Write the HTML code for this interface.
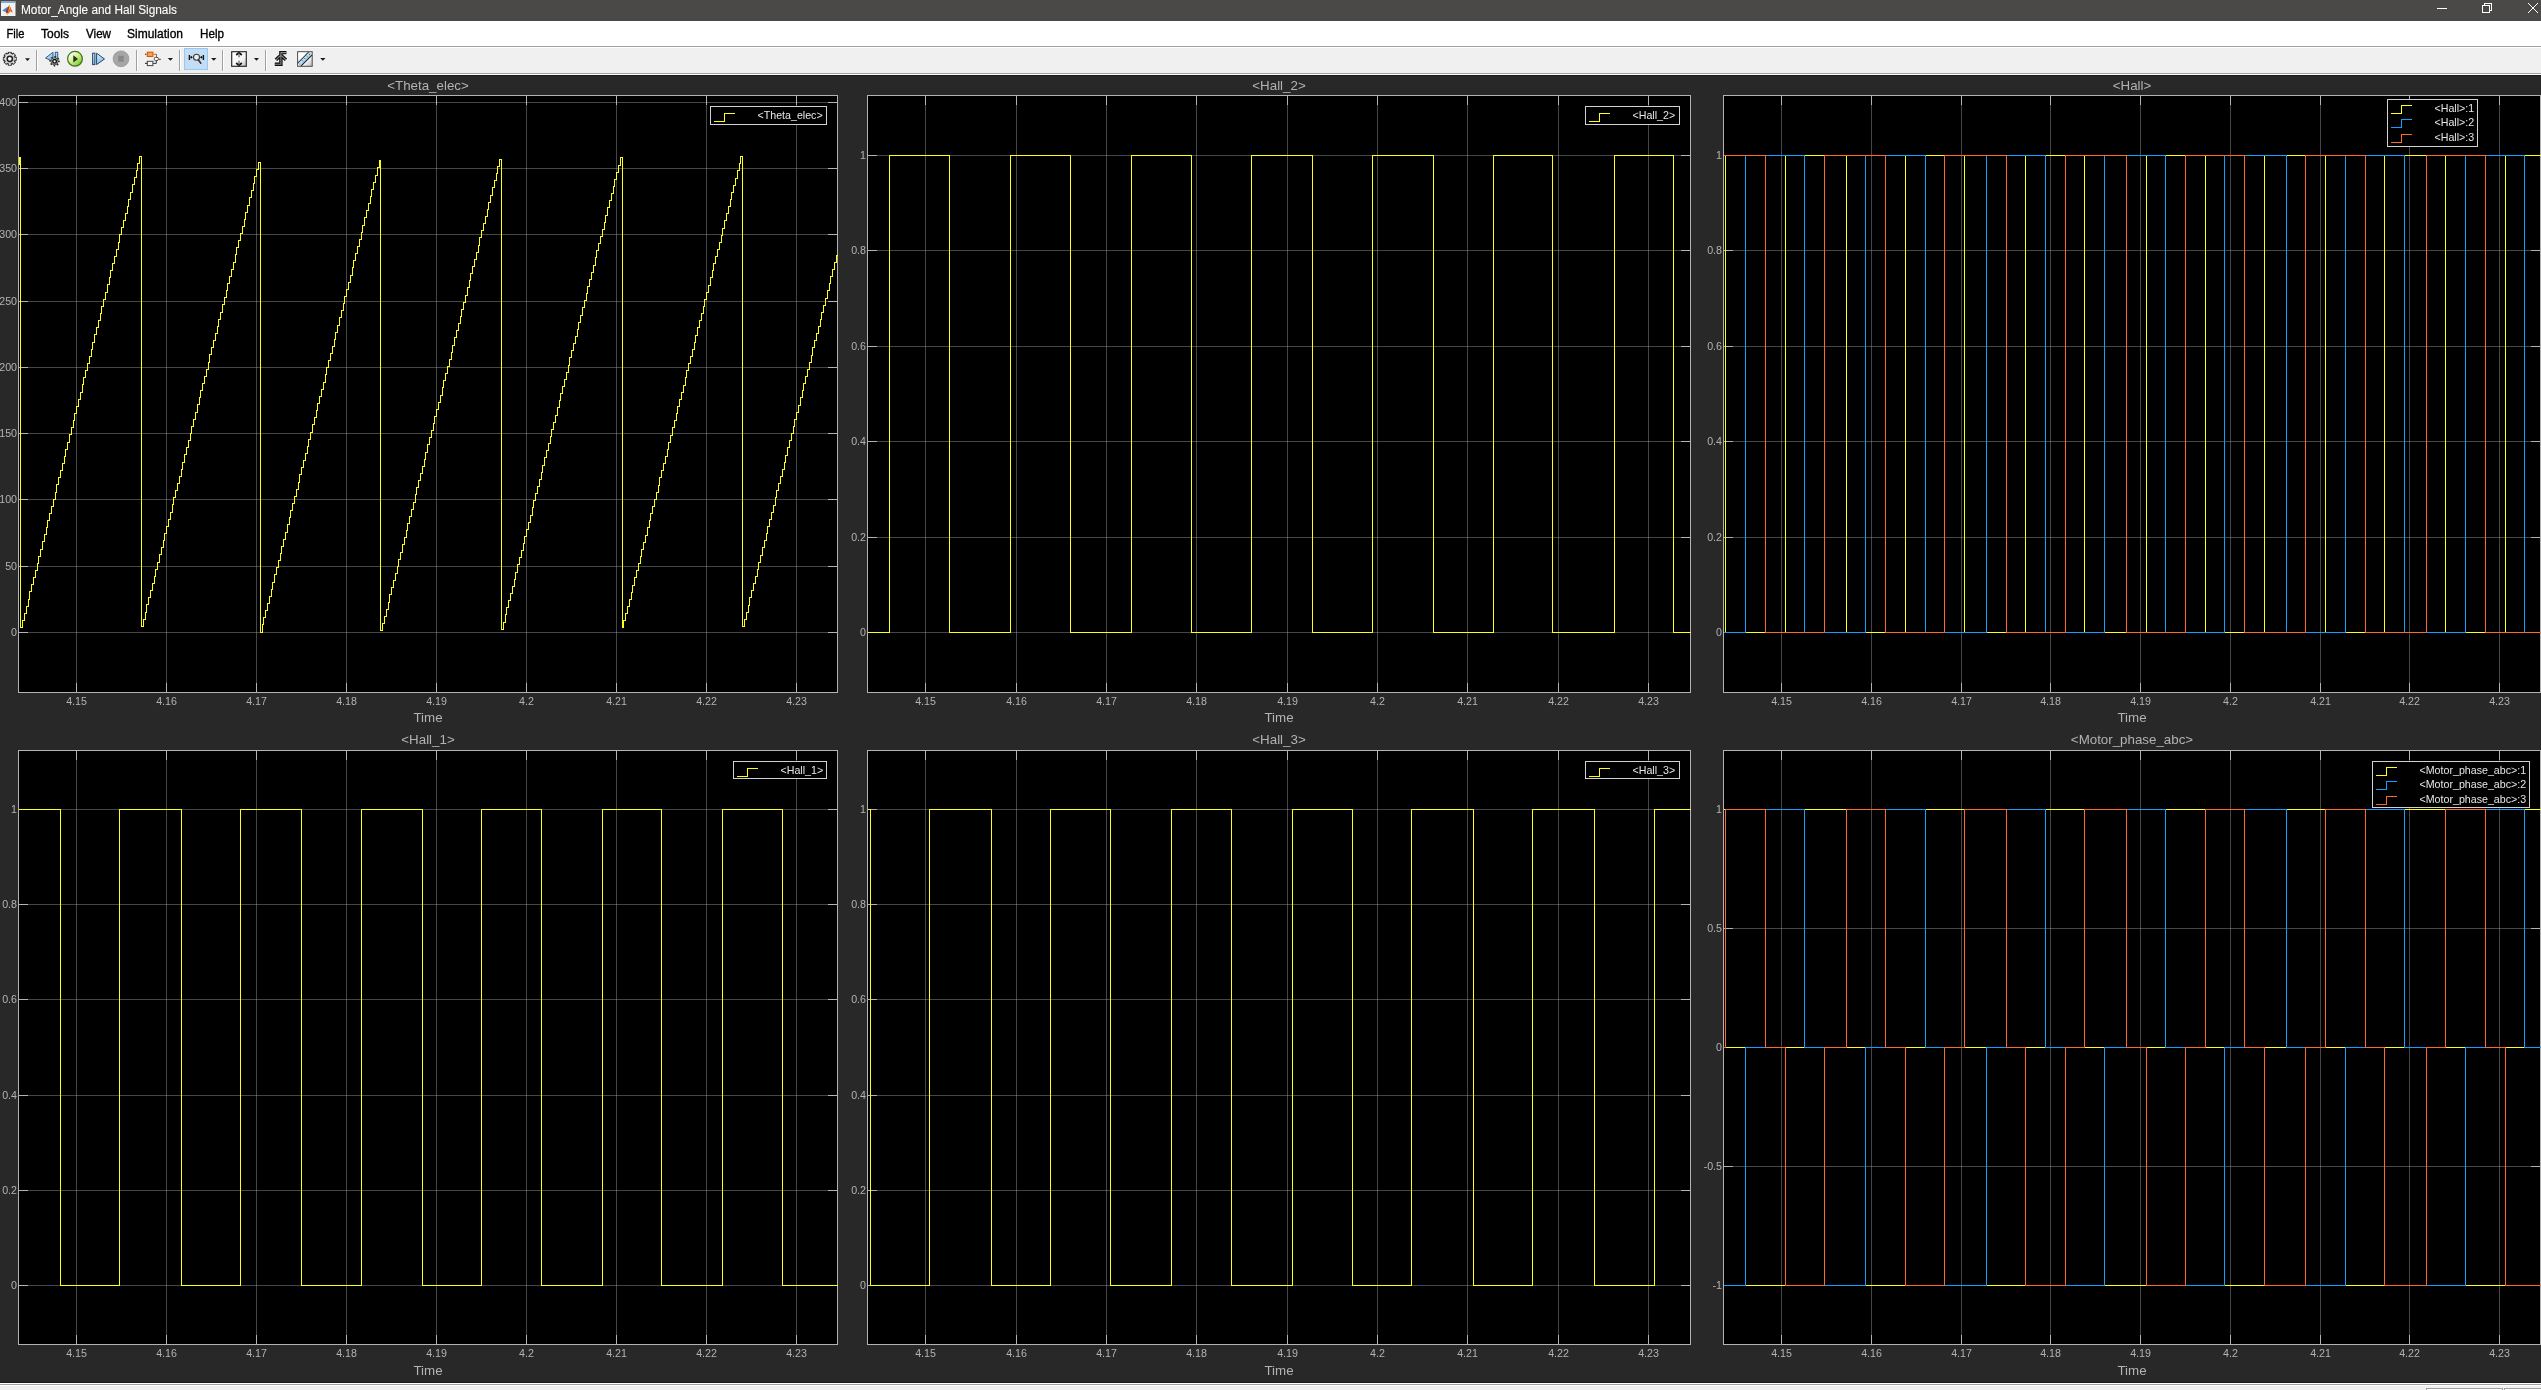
<!DOCTYPE html><html><head><meta charset="utf-8"><style>html,body{margin:0;padding:0;width:2541px;height:1390px;overflow:hidden;background:#282828}svg{display:block;will-change:transform}text{font-family:"Liberation Sans", sans-serif}</style></head><body>
<svg width="2541" height="1390" viewBox="0 0 2541 1390" shape-rendering="crispEdges">
<rect x="0" y="0" width="2541" height="21" fill="#4b4947"/>
<g shape-rendering="geometricPrecision"><rect x="1" y="1.5" width="14.5" height="14.5" fill="#f2f2f2"/><rect x="1" y="1.5" width="14.5" height="1.5" fill="#78b0dc"/><path d="M2.2 10.6 L7.6 6.8 L8.6 8.2 L6.2 12.2 Z" fill="#3f8bd0"/><path d="M5.8 12 L8.6 6.2 L9.4 5 L8.9 9.5 L7.3 14.6 Z" fill="#a8281c"/><path d="M7.3 14.6 L9.4 5 L10.6 8.6 L11 11 L9 13 Z" fill="#e8721e"/><path d="M9.4 5 L12.9 12.9 L11 11.2 Z" fill="#d2412a"/><path d="M9.1 6 L9.8 5.6 L9.9 9 L9.2 9.4 Z" fill="#f3c62c"/><path d="M6.8 13.4 L8 12.6 L8.2 14.4 L7.4 14.8 Z" fill="#f4b020"/></g>
<text x="21" y="14" font-size="12.3" fill="#ffffff" stroke="#ffffff" stroke-width="0.08" textLength="156" lengthAdjust="spacingAndGlyphs">Motor_Angle and Hall Signals</text>
<rect x="2437" y="8" width="10" height="1" fill="#ffffff"/>
<g fill="none" stroke="#ffffff" stroke-width="1"><rect x="2482.5" y="5.5" width="7" height="7"/><path d="M2484.5 5.5 V3.5 H2491.5 V10.5 H2489.5"/></g>
<g shape-rendering="geometricPrecision" stroke="#ffffff" stroke-width="1"><path d="M2528 3 L2538 13 M2538 3 L2528 13"/></g>
<rect x="0" y="21" width="2541" height="25" fill="#ffffff"/>
<text x="6.5" y="38" font-size="12.3" fill="#000000" stroke="#000000" stroke-width="0.35" textLength="18" lengthAdjust="spacingAndGlyphs">File</text>
<text x="41" y="38" font-size="12.3" fill="#000000" stroke="#000000" stroke-width="0.35" textLength="28" lengthAdjust="spacingAndGlyphs">Tools</text>
<text x="86" y="38" font-size="12.3" fill="#000000" stroke="#000000" stroke-width="0.35" textLength="25" lengthAdjust="spacingAndGlyphs">View</text>
<text x="127" y="38" font-size="12.3" fill="#000000" stroke="#000000" stroke-width="0.35" textLength="56" lengthAdjust="spacingAndGlyphs">Simulation</text>
<text x="200" y="38" font-size="12.3" fill="#000000" stroke="#000000" stroke-width="0.35" textLength="24" lengthAdjust="spacingAndGlyphs">Help</text>
<rect x="0" y="46" width="2541" height="1" fill="#a0a0a0"/>
<rect x="0" y="47" width="2541" height="1" fill="#ffffff"/>
<rect x="0" y="48" width="2541" height="25" fill="#f0f0f0"/>
<rect x="0" y="73" width="2541" height="1" fill="#a0a0a0"/>
<rect x="0" y="74" width="2541" height="1" fill="#ffffff"/>
<rect x="0" y="75" width="2541" height="1" fill="#1b1b1b"/>
<rect x="0" y="76" width="2541" height="1306" fill="#282828"/>
<rect x="0" y="1382" width="2541" height="1" fill="#1b1b1b"/>
<rect x="0" y="1383" width="2541" height="1" fill="#ffffff"/>
<rect x="0" y="1384" width="2541" height="1" fill="#a0a0a0"/>
<rect x="0" y="1385" width="2541" height="1" fill="#ffffff"/>
<rect x="0" y="1386" width="2541" height="4" fill="#f0f0f0"/>
<rect x="2426.5" y="1388.5" width="76" height="3" fill="#ffffff" stroke="#a0a0a0" stroke-width="1"/>
<rect x="2504.5" y="1388.5" width="40" height="3" fill="#ffffff" stroke="#a0a0a0" stroke-width="1"/>
<defs><linearGradient id="gg" gradientUnits="userSpaceOnUse" x1="4" y1="53" x2="16" y2="65"><stop offset="0" stop-color="#f6f6f6"/><stop offset="1" stop-color="#9c9c9c"/></linearGradient><linearGradient id="gg2" gradientUnits="userSpaceOnUse" x1="50" y1="57" x2="59" y2="66"><stop offset="0" stop-color="#ffffff"/><stop offset="1" stop-color="#a0a0a0"/></linearGradient><linearGradient id="gp" x1="0.15" y1="0.15" x2="0.85" y2="0.9"><stop offset="0" stop-color="#ffffff"/><stop offset="0.55" stop-color="#c2ec70"/><stop offset="1" stop-color="#6cc83c"/></linearGradient><linearGradient id="gs" x1="0.2" y1="0.2" x2="1" y2="1"><stop offset="0" stop-color="#ffffff"/><stop offset="0.55" stop-color="#f4f4f4"/><stop offset="1" stop-color="#b8b8b8"/></linearGradient><linearGradient id="gb" x1="0" y1="0" x2="0.6" y2="1"><stop offset="0" stop-color="#dff2ff"/><stop offset="1" stop-color="#7ab8e6"/></linearGradient><linearGradient id="gr" x1="0" y1="0" x2="1" y2="1"><stop offset="0" stop-color="#e8f6ff"/><stop offset="1" stop-color="#7cc0ea"/></linearGradient></defs><g shape-rendering="geometricPrecision"><g fill="url(#gg)" stroke="#2e2e2e" stroke-width="1.1"><rect x="8.35" y="52.45" width="2.90" height="1.83" transform="rotate(0.0 9.8 58.8)"/><rect x="8.35" y="52.45" width="2.90" height="1.83" transform="rotate(45.0 9.8 58.8)"/><rect x="8.35" y="52.45" width="2.90" height="1.83" transform="rotate(90.0 9.8 58.8)"/><rect x="8.35" y="52.45" width="2.90" height="1.83" transform="rotate(135.0 9.8 58.8)"/><rect x="8.35" y="52.45" width="2.90" height="1.83" transform="rotate(180.0 9.8 58.8)"/><rect x="8.35" y="52.45" width="2.90" height="1.83" transform="rotate(225.0 9.8 58.8)"/><rect x="8.35" y="52.45" width="2.90" height="1.83" transform="rotate(270.0 9.8 58.8)"/><rect x="8.35" y="52.45" width="2.90" height="1.83" transform="rotate(315.0 9.8 58.8)"/></g><circle cx="9.8" cy="58.8" r="5.52" fill="url(#gg)" stroke="#2e2e2e" stroke-width="1.1"/><g fill="url(#gg)"><rect x="8.90" y="52.68" width="1.80" height="2.20" transform="rotate(0.0 9.8 58.8)"/><rect x="8.90" y="52.68" width="1.80" height="2.20" transform="rotate(45.0 9.8 58.8)"/><rect x="8.90" y="52.68" width="1.80" height="2.20" transform="rotate(90.0 9.8 58.8)"/><rect x="8.90" y="52.68" width="1.80" height="2.20" transform="rotate(135.0 9.8 58.8)"/><rect x="8.90" y="52.68" width="1.80" height="2.20" transform="rotate(180.0 9.8 58.8)"/><rect x="8.90" y="52.68" width="1.80" height="2.20" transform="rotate(225.0 9.8 58.8)"/><rect x="8.90" y="52.68" width="1.80" height="2.20" transform="rotate(270.0 9.8 58.8)"/><rect x="8.90" y="52.68" width="1.80" height="2.20" transform="rotate(315.0 9.8 58.8)"/></g><circle cx="9.8" cy="58.8" r="2.6" fill="#ffffff" stroke="#1e1e1e" stroke-width="1.5"/><path d="M25 58.2 L30 58.2 L27.5 61.0 Z" fill="#1a1a1a"/><path d="M45.5 58 L53 52.3 L53 61.5 Z" fill="url(#gb)" stroke="#2f5f90" stroke-width="1" stroke-linejoin="round"/><rect x="55.3" y="52.3" width="2.4" height="7" fill="url(#gb)" stroke="#2f5f90" stroke-width="1"/><circle cx="54.6" cy="61.3" r="4.1" fill="none" stroke="#2a2a2a" stroke-width="2.2" stroke-dasharray="1.55 1.67" transform="rotate(-10 54.6 61.3)"/><circle cx="54.6" cy="61.3" r="3.5" fill="url(#gg2)" stroke="#3a3a3a" stroke-width="0.8"/><circle cx="54.6" cy="61.3" r="1.8" fill="#ffffff" stroke="#111111" stroke-width="1.4"/><circle cx="75" cy="58.8" r="7.4" fill="url(#gp)" stroke="#43701c" stroke-width="1.2"/><path d="M73.3 55.3 L78 59 L73.3 62.5 Z" fill="#2a2a2a"/><rect x="92.6" y="53.2" width="2.3" height="11.4" fill="url(#gb)" stroke="#24476c" stroke-width="1"/><path d="M96.6 53.2 L104.5 59 L96.6 64.6 Z" fill="url(#gb)" stroke="#24476c" stroke-width="1" stroke-linejoin="round"/><circle cx="121" cy="58.8" r="7.9" fill="#a6a6a6" stroke="#999999" stroke-width="0.8"/><rect x="118.3" y="55.8" width="5.5" height="6" fill="#888888"/></g><rect x="36" y="50" width="1" height="21" fill="#a0a0a0"/><rect x="37" y="50" width="1" height="21" fill="#ffffff"/><rect x="136" y="50" width="1" height="21" fill="#a0a0a0"/><rect x="137" y="50" width="1" height="21" fill="#ffffff"/><rect x="179" y="50" width="1" height="21" fill="#a0a0a0"/><rect x="180" y="50" width="1" height="21" fill="#ffffff"/><rect x="222" y="50" width="1" height="21" fill="#a0a0a0"/><rect x="223" y="50" width="1" height="21" fill="#ffffff"/><rect x="265" y="50" width="1" height="21" fill="#a0a0a0"/><rect x="266" y="50" width="1" height="21" fill="#ffffff"/><g shape-rendering="geometricPrecision"><path d="M145 54.3 H147.3 M152.8 54.3 H156.5 V57.3" stroke="#c45a18" stroke-width="1" fill="none"/><path d="M145 63.4 H147.3 M152.8 63.4 H156.3 V60.4 M158.4 59.3 H160.8" stroke="#3a3a3a" stroke-width="1" fill="none"/><path d="M145 54.3 H147 M145 63.4 H147" stroke="#3a3a3a" stroke-width="1" fill="none"/><rect x="146.2" y="51" width="7.6" height="6.6" rx="1" fill="#ffe9a8" opacity="0.8"/><rect x="147.3" y="52.2" width="5.6" height="4.3" fill="#f5a055" stroke="#c8561a" stroke-width="1"/><rect x="154.3" y="57.3" width="4" height="3.3" rx="1.3" fill="#ffffff" stroke="#444" stroke-width="1"/><rect x="147.3" y="61.3" width="5.6" height="4.3" fill="#f4f4f4" stroke="#444" stroke-width="1"/><path d="M167.8 58.1 L173 58.1 L170.4 60.7 Z" fill="#1a1a1a"/></g><rect x="184.5" y="48.5" width="23" height="21" fill="#c4ddf3" stroke="#94c8f6" stroke-width="1"/><g shape-rendering="geometricPrecision"><path d="M189.4 55 V60 M203.4 55 V60" stroke="#111" stroke-width="1.4" fill="none"/><path d="M189.5 57.3 H193.2 M199.8 57.3 H203.3" stroke="#555" stroke-width="0.8" fill="none"/><ellipse cx="191.3" cy="57.3" rx="0.7" ry="1.2" fill="#111"/><ellipse cx="201.4" cy="57.3" rx="0.7" ry="1.2" fill="#111"/><circle cx="196.5" cy="57.3" r="3" fill="#e8eef2" stroke="#3a3a3a" stroke-width="1.1"/><path d="M198.3 59.8 L200.8 63.3" stroke="#333" stroke-width="1.5" stroke-linecap="round"/><path d="M211 58.1 L216.5 58.1 L213.75 60.7 Z" fill="#1a1a1a"/><rect x="231.7" y="51.7" width="14.6" height="14.6" fill="url(#gs)" stroke="#2e2e2e" stroke-width="1.2"/><path d="M239 55.5 V57.3 M239 60.7 V62.5" stroke="#8a8a8a" stroke-width="1.8" fill="none"/><path d="M236.2 55 L239 52.6 L241.8 55 M236.2 63 L239 65.4 L241.8 63" stroke="#111" stroke-width="1.7" fill="none"/><path d="M239 52.6 V55.5 M239 62.5 V65.4" stroke="#555" stroke-width="1.1" fill="none"/><path d="M254 58.1 L259 58.1 L256.5 60.7 Z" fill="#1a1a1a"/><path d="M274.8 64.3 H280.9 V52.6 H286.4 M275.9 59.8 L280.9 55.2 L285.9 59.8" stroke="#0e0e0e" stroke-width="3.4" fill="none" stroke-linejoin="miter"/><path d="M274.8 64.3 H280.9 V52.6 H286.4 M275.9 59.8 L280.9 55.2 L285.9 59.8" stroke="#8c8c8c" stroke-width="1.1" fill="none"/><rect x="297.6" y="51.7" width="14.6" height="14.6" fill="url(#gs)" stroke="#4a4a4a" stroke-width="1"/><path d="M299.6 64.3 L310.3 53.6" stroke="#161616" stroke-width="5.4" stroke-linecap="butt"/><path d="M299.6 64.3 L310.3 53.6" stroke="url(#gr)" stroke-width="3.6" stroke-linecap="butt"/><path d="M302.3 60.5 L303.1 61.3 M304.5 58.3 L305.3 59.1 M306.7 56.1 L307.5 56.9 M308.9 53.9 L309.7 54.7" stroke="#1a1a1a" stroke-width="0.8"/><path d="M320.2 58.1 L325.5 58.1 L322.85 60.7 Z" fill="#1a1a1a"/></g>
<defs><clipPath id="clip1top"><rect x="19" y="96" width="819" height="596"/></clipPath></defs>
<rect x="18" y="95" width="820" height="598" fill="#000000"/>
<path d="M76.5 96 V692 M166.5 96 V692 M256.5 96 V692 M346.5 96 V692 M436.5 96 V692 M526.5 96 V692 M616.5 96 V692 M706.5 96 V692 M796.5 96 V692" stroke="#afafaf" stroke-opacity="0.4" stroke-width="1" fill="none"/>
<path d="M19 632.5 H837 M19 566.5 H837 M19 499.5 H837 M19 433.5 H837 M19 367.5 H837 M19 301.5 H837 M19 234.5 H837 M19 168.5 H837 M19 102.5 H837" stroke="#afafaf" stroke-opacity="0.4" stroke-width="1" fill="none"/>
<path d="M76.5 692 V683 M76.5 96 V105 M166.5 692 V683 M166.5 96 V105 M256.5 692 V683 M256.5 96 V105 M346.5 692 V683 M346.5 96 V105 M436.5 692 V683 M436.5 96 V105 M526.5 692 V683 M526.5 96 V105 M616.5 692 V683 M616.5 96 V105 M706.5 692 V683 M706.5 96 V105 M796.5 692 V683 M796.5 96 V105 M19 632.5 H28 M837 632.5 H828 M19 566.5 H28 M837 566.5 H828 M19 499.5 H28 M837 499.5 H828 M19 433.5 H28 M837 433.5 H828 M19 367.5 H28 M837 367.5 H828 M19 301.5 H28 M837 301.5 H828 M19 234.5 H28 M837 234.5 H828 M19 168.5 H28 M837 168.5 H828 M19 102.5 H28 M837 102.5 H828" stroke="#b3b3b3" stroke-width="1" fill="none"/>
<rect x="18.5" y="95.5" width="819" height="597" fill="none" stroke="#b3b3b3" stroke-width="1"/>
<g clip-path="url(#clip1top)" fill="none" stroke-width="1">
<path d="M-103.5 166.5 L-101.5 166.5 L-101.5 159.5 L-99.5 159.5 L-99.5 629.5 L-97.5 629.5 L-97.5 621.5 L-96.5 621.5 L-96.5 614.5 L-94.5 614.5 L-94.5 607.5 L-92.5 607.5 L-92.5 600.5 L-90.5 600.5 L-90.5 593.5 L-88.5 593.5 L-88.5 586.5 L-87.5 586.5 L-87.5 579.5 L-85.5 579.5 L-85.5 571.5 L-83.5 571.5 L-83.5 564.5 L-81.5 564.5 L-81.5 557.5 L-79.5 557.5 L-79.5 550.5 L-78.5 550.5 L-78.5 543.5 L-76.5 543.5 L-76.5 536.5 L-74.5 536.5 L-74.5 529.5 L-72.5 529.5 L-72.5 521.5 L-70.5 521.5 L-70.5 514.5 L-69.5 514.5 L-69.5 507.5 L-67.5 507.5 L-67.5 500.5 L-65.5 500.5 L-65.5 493.5 L-63.5 493.5 L-63.5 486.5 L-61.5 486.5 L-61.5 479.5 L-60.5 479.5 L-60.5 471.5 L-58.5 471.5 L-58.5 464.5 L-56.5 464.5 L-56.5 457.5 L-54.5 457.5 L-54.5 450.5 L-52.5 450.5 L-52.5 443.5 L-51.5 443.5 L-51.5 436.5 L-49.5 436.5 L-49.5 429.5 L-47.5 429.5 L-47.5 422.5 L-45.5 422.5 L-45.5 414.5 L-43.5 414.5 L-43.5 407.5 L-42.5 407.5 L-42.5 400.5 L-40.5 400.5 L-40.5 393.5 L-38.5 393.5 L-38.5 386.5 L-36.5 386.5 L-36.5 379.5 L-34.5 379.5 L-34.5 372.5 L-33.5 372.5 L-33.5 364.5 L-31.5 364.5 L-31.5 357.5 L-29.5 357.5 L-29.5 350.5 L-27.5 350.5 L-27.5 343.5 L-25.5 343.5 L-25.5 336.5 L-24.5 336.5 L-24.5 329.5 L-22.5 329.5 L-22.5 322.5 L-20.5 322.5 L-20.5 314.5 L-18.5 314.5 L-18.5 307.5 L-16.5 307.5 L-16.5 300.5 L-15.5 300.5 L-15.5 293.5 L-13.5 293.5 L-13.5 286.5 L-11.5 286.5 L-11.5 279.5 L-9.5 279.5 L-9.5 272.5 L-7.5 272.5 L-7.5 264.5 L-6.5 264.5 L-6.5 257.5 L-4.5 257.5 L-4.5 250.5 L-2.5 250.5 L-2.5 243.5 L-0.5 243.5 L-0.5 236.5 L1.5 236.5 L1.5 229.5 L2.5 229.5 L2.5 222.5 L4.5 222.5 L4.5 214.5 L6.5 214.5 L6.5 207.5 L8.5 207.5 L8.5 200.5 L10.5 200.5 L10.5 193.5 L11.5 193.5 L11.5 186.5 L13.5 186.5 L13.5 179.5 L15.5 179.5 L15.5 172.5 L17.5 172.5 L17.5 164.5 L19.5 164.5 L19.5 157.5 L20.5 157.5 L20.5 627.5 L22.5 627.5 L22.5 620.5 L24.5 620.5 L24.5 613.5 L26.5 613.5 L26.5 606.5 L28.5 606.5 L28.5 599.5 L29.5 599.5 L29.5 591.5 L31.5 591.5 L31.5 584.5 L33.5 584.5 L33.5 577.5 L35.5 577.5 L35.5 570.5 L37.5 570.5 L37.5 563.5 L38.5 563.5 L38.5 556.5 L40.5 556.5 L40.5 549.5 L42.5 549.5 L42.5 541.5 L44.5 541.5 L44.5 534.5 L46.5 534.5 L46.5 527.5 L47.5 527.5 L47.5 520.5 L49.5 520.5 L49.5 513.5 L51.5 513.5 L51.5 506.5 L53.5 506.5 L53.5 499.5 L55.5 499.5 L55.5 492.5 L56.5 492.5 L56.5 484.5 L58.5 484.5 L58.5 477.5 L60.5 477.5 L60.5 470.5 L62.5 470.5 L62.5 463.5 L64.5 463.5 L64.5 456.5 L65.5 456.5 L65.5 449.5 L67.5 449.5 L67.5 442.5 L69.5 442.5 L69.5 434.5 L71.5 434.5 L71.5 427.5 L73.5 427.5 L73.5 420.5 L74.5 420.5 L74.5 413.5 L76.5 413.5 L76.5 406.5 L78.5 406.5 L78.5 399.5 L80.5 399.5 L80.5 392.5 L82.5 392.5 L82.5 384.5 L83.5 384.5 L83.5 377.5 L85.5 377.5 L85.5 370.5 L87.5 370.5 L87.5 363.5 L89.5 363.5 L89.5 356.5 L91.5 356.5 L91.5 349.5 L92.5 349.5 L92.5 342.5 L94.5 342.5 L94.5 334.5 L96.5 334.5 L96.5 327.5 L98.5 327.5 L98.5 320.5 L100.5 320.5 L100.5 313.5 L101.5 313.5 L101.5 306.5 L103.5 306.5 L103.5 299.5 L105.5 299.5 L105.5 292.5 L107.5 292.5 L107.5 284.5 L109.5 284.5 L109.5 277.5 L110.5 277.5 L110.5 270.5 L112.5 270.5 L112.5 263.5 L114.5 263.5 L114.5 256.5 L116.5 256.5 L116.5 249.5 L118.5 249.5 L118.5 242.5 L119.5 242.5 L119.5 234.5 L121.5 234.5 L121.5 227.5 L123.5 227.5 L123.5 220.5 L125.5 220.5 L125.5 213.5 L127.5 213.5 L127.5 206.5 L128.5 206.5 L128.5 199.5 L130.5 199.5 L130.5 192.5 L132.5 192.5 L132.5 184.5 L134.5 184.5 L134.5 177.5 L136.5 177.5 L136.5 170.5 L137.5 170.5 L137.5 163.5 L139.5 163.5 L139.5 156.5 L141.5 156.5 L141.5 626.5 L143.5 626.5 L143.5 619.5 L145.5 619.5 L145.5 612.5 L146.5 612.5 L146.5 604.5 L148.5 604.5 L148.5 597.5 L150.5 597.5 L150.5 590.5 L152.5 590.5 L152.5 583.5 L154.5 583.5 L154.5 576.5 L155.5 576.5 L155.5 569.5 L157.5 569.5 L157.5 562.5 L159.5 562.5 L159.5 554.5 L161.5 554.5 L161.5 547.5 L163.5 547.5 L163.5 540.5 L164.5 540.5 L164.5 533.5 L166.5 533.5 L166.5 526.5 L168.5 526.5 L168.5 519.5 L170.5 519.5 L170.5 512.5 L172.5 512.5 L172.5 504.5 L173.5 504.5 L173.5 497.5 L175.5 497.5 L175.5 490.5 L177.5 490.5 L177.5 483.5 L179.5 483.5 L179.5 476.5 L181.5 476.5 L181.5 469.5 L182.5 469.5 L182.5 462.5 L184.5 462.5 L184.5 454.5 L186.5 454.5 L186.5 447.5 L188.5 447.5 L188.5 440.5 L190.5 440.5 L190.5 433.5 L191.5 433.5 L191.5 426.5 L193.5 426.5 L193.5 419.5 L195.5 419.5 L195.5 412.5 L197.5 412.5 L197.5 404.5 L199.5 404.5 L199.5 397.5 L200.5 397.5 L200.5 390.5 L202.5 390.5 L202.5 383.5 L204.5 383.5 L204.5 376.5 L206.5 376.5 L206.5 369.5 L208.5 369.5 L208.5 362.5 L209.5 362.5 L209.5 354.5 L211.5 354.5 L211.5 347.5 L213.5 347.5 L213.5 340.5 L215.5 340.5 L215.5 333.5 L217.5 333.5 L217.5 326.5 L218.5 326.5 L218.5 319.5 L220.5 319.5 L220.5 312.5 L222.5 312.5 L222.5 304.5 L224.5 304.5 L224.5 297.5 L226.5 297.5 L226.5 290.5 L227.5 290.5 L227.5 283.5 L229.5 283.5 L229.5 276.5 L231.5 276.5 L231.5 269.5 L233.5 269.5 L233.5 262.5 L235.5 262.5 L235.5 254.5 L236.5 254.5 L236.5 247.5 L238.5 247.5 L238.5 240.5 L240.5 240.5 L240.5 233.5 L242.5 233.5 L242.5 226.5 L244.5 226.5 L244.5 219.5 L245.5 219.5 L245.5 212.5 L247.5 212.5 L247.5 205.5 L249.5 205.5 L249.5 197.5 L251.5 197.5 L251.5 190.5 L253.5 190.5 L253.5 183.5 L254.5 183.5 L254.5 176.5 L256.5 176.5 L256.5 169.5 L258.5 169.5 L258.5 162.5 L260.5 162.5 L260.5 632.5 L262.5 632.5 L262.5 624.5 L263.5 624.5 L263.5 617.5 L265.5 617.5 L265.5 610.5 L267.5 610.5 L267.5 603.5 L269.5 603.5 L269.5 596.5 L271.5 596.5 L271.5 589.5 L272.5 589.5 L272.5 582.5 L274.5 582.5 L274.5 574.5 L276.5 574.5 L276.5 567.5 L278.5 567.5 L278.5 560.5 L280.5 560.5 L280.5 553.5 L281.5 553.5 L281.5 546.5 L283.5 546.5 L283.5 539.5 L285.5 539.5 L285.5 532.5 L287.5 532.5 L287.5 524.5 L289.5 524.5 L289.5 517.5 L290.5 517.5 L290.5 510.5 L292.5 510.5 L292.5 503.5 L294.5 503.5 L294.5 496.5 L296.5 496.5 L296.5 489.5 L298.5 489.5 L298.5 482.5 L299.5 482.5 L299.5 474.5 L301.5 474.5 L301.5 467.5 L303.5 467.5 L303.5 460.5 L305.5 460.5 L305.5 453.5 L307.5 453.5 L307.5 446.5 L308.5 446.5 L308.5 439.5 L310.5 439.5 L310.5 432.5 L312.5 432.5 L312.5 424.5 L314.5 424.5 L314.5 417.5 L316.5 417.5 L316.5 410.5 L317.5 410.5 L317.5 403.5 L319.5 403.5 L319.5 396.5 L321.5 396.5 L321.5 389.5 L323.5 389.5 L323.5 382.5 L325.5 382.5 L325.5 374.5 L326.5 374.5 L326.5 367.5 L328.5 367.5 L328.5 360.5 L330.5 360.5 L330.5 353.5 L332.5 353.5 L332.5 346.5 L334.5 346.5 L334.5 339.5 L335.5 339.5 L335.5 332.5 L337.5 332.5 L337.5 325.5 L339.5 325.5 L339.5 317.5 L341.5 317.5 L341.5 310.5 L343.5 310.5 L343.5 303.5 L344.5 303.5 L344.5 296.5 L346.5 296.5 L346.5 289.5 L348.5 289.5 L348.5 282.5 L350.5 282.5 L350.5 275.5 L352.5 275.5 L352.5 267.5 L353.5 267.5 L353.5 260.5 L355.5 260.5 L355.5 253.5 L357.5 253.5 L357.5 246.5 L359.5 246.5 L359.5 239.5 L361.5 239.5 L361.5 232.5 L362.5 232.5 L362.5 225.5 L364.5 225.5 L364.5 217.5 L366.5 217.5 L366.5 210.5 L368.5 210.5 L368.5 203.5 L370.5 203.5 L370.5 196.5 L371.5 196.5 L371.5 189.5 L373.5 189.5 L373.5 182.5 L375.5 182.5 L375.5 175.5 L377.5 175.5 L377.5 167.5 L379.5 167.5 L379.5 160.5 L380.5 160.5 L380.5 630.5 L382.5 630.5 L382.5 623.5 L384.5 623.5 L384.5 616.5 L386.5 616.5 L386.5 609.5 L388.5 609.5 L388.5 602.5 L389.5 602.5 L389.5 594.5 L391.5 594.5 L391.5 587.5 L393.5 587.5 L393.5 580.5 L395.5 580.5 L395.5 573.5 L397.5 573.5 L397.5 566.5 L398.5 566.5 L398.5 559.5 L400.5 559.5 L400.5 552.5 L402.5 552.5 L402.5 544.5 L404.5 544.5 L404.5 537.5 L406.5 537.5 L406.5 530.5 L407.5 530.5 L407.5 523.5 L409.5 523.5 L409.5 516.5 L411.5 516.5 L411.5 509.5 L413.5 509.5 L413.5 502.5 L415.5 502.5 L415.5 494.5 L416.5 494.5 L416.5 487.5 L418.5 487.5 L418.5 480.5 L420.5 480.5 L420.5 473.5 L422.5 473.5 L422.5 466.5 L424.5 466.5 L424.5 459.5 L425.5 459.5 L425.5 452.5 L427.5 452.5 L427.5 444.5 L429.5 444.5 L429.5 437.5 L431.5 437.5 L431.5 430.5 L433.5 430.5 L433.5 423.5 L434.5 423.5 L434.5 416.5 L436.5 416.5 L436.5 409.5 L438.5 409.5 L438.5 402.5 L440.5 402.5 L440.5 395.5 L442.5 395.5 L442.5 387.5 L443.5 387.5 L443.5 380.5 L445.5 380.5 L445.5 373.5 L447.5 373.5 L447.5 366.5 L449.5 366.5 L449.5 359.5 L451.5 359.5 L451.5 352.5 L452.5 352.5 L452.5 345.5 L454.5 345.5 L454.5 337.5 L456.5 337.5 L456.5 330.5 L458.5 330.5 L458.5 323.5 L460.5 323.5 L460.5 316.5 L461.5 316.5 L461.5 309.5 L463.5 309.5 L463.5 302.5 L465.5 302.5 L465.5 295.5 L467.5 295.5 L467.5 287.5 L469.5 287.5 L469.5 280.5 L470.5 280.5 L470.5 273.5 L472.5 273.5 L472.5 266.5 L474.5 266.5 L474.5 259.5 L476.5 259.5 L476.5 252.5 L478.5 252.5 L478.5 245.5 L479.5 245.5 L479.5 237.5 L481.5 237.5 L481.5 230.5 L483.5 230.5 L483.5 223.5 L485.5 223.5 L485.5 216.5 L487.5 216.5 L487.5 209.5 L488.5 209.5 L488.5 202.5 L490.5 202.5 L490.5 195.5 L492.5 195.5 L492.5 187.5 L494.5 187.5 L494.5 180.5 L496.5 180.5 L496.5 173.5 L497.5 173.5 L497.5 166.5 L499.5 166.5 L499.5 159.5 L501.5 159.5 L501.5 629.5 L503.5 629.5 L503.5 622.5 L505.5 622.5 L505.5 614.5 L506.5 614.5 L506.5 607.5 L508.5 607.5 L508.5 600.5 L510.5 600.5 L510.5 593.5 L512.5 593.5 L512.5 586.5 L514.5 586.5 L514.5 579.5 L515.5 579.5 L515.5 572.5 L517.5 572.5 L517.5 564.5 L519.5 564.5 L519.5 557.5 L521.5 557.5 L521.5 550.5 L523.5 550.5 L523.5 543.5 L524.5 543.5 L524.5 536.5 L526.5 536.5 L526.5 529.5 L528.5 529.5 L528.5 522.5 L530.5 522.5 L530.5 515.5 L532.5 515.5 L532.5 507.5 L533.5 507.5 L533.5 500.5 L535.5 500.5 L535.5 493.5 L537.5 493.5 L537.5 486.5 L539.5 486.5 L539.5 479.5 L541.5 479.5 L541.5 472.5 L542.5 472.5 L542.5 465.5 L544.5 465.5 L544.5 457.5 L546.5 457.5 L546.5 450.5 L548.5 450.5 L548.5 443.5 L550.5 443.5 L550.5 436.5 L551.5 436.5 L551.5 429.5 L553.5 429.5 L553.5 422.5 L555.5 422.5 L555.5 415.5 L557.5 415.5 L557.5 407.5 L559.5 407.5 L559.5 400.5 L560.5 400.5 L560.5 393.5 L562.5 393.5 L562.5 386.5 L564.5 386.5 L564.5 379.5 L566.5 379.5 L566.5 372.5 L568.5 372.5 L568.5 365.5 L569.5 365.5 L569.5 357.5 L571.5 357.5 L571.5 350.5 L573.5 350.5 L573.5 343.5 L575.5 343.5 L575.5 336.5 L577.5 336.5 L577.5 329.5 L578.5 329.5 L578.5 322.5 L580.5 322.5 L580.5 315.5 L582.5 315.5 L582.5 307.5 L584.5 307.5 L584.5 300.5 L586.5 300.5 L586.5 293.5 L587.5 293.5 L587.5 286.5 L589.5 286.5 L589.5 279.5 L591.5 279.5 L591.5 272.5 L593.5 272.5 L593.5 265.5 L595.5 265.5 L595.5 257.5 L596.5 257.5 L596.5 250.5 L598.5 250.5 L598.5 243.5 L600.5 243.5 L600.5 236.5 L602.5 236.5 L602.5 229.5 L604.5 229.5 L604.5 222.5 L605.5 222.5 L605.5 215.5 L607.5 215.5 L607.5 207.5 L609.5 207.5 L609.5 200.5 L611.5 200.5 L611.5 193.5 L613.5 193.5 L613.5 186.5 L614.5 186.5 L614.5 179.5 L616.5 179.5 L616.5 172.5 L618.5 172.5 L618.5 165.5 L620.5 165.5 L620.5 157.5 L622.5 157.5 L622.5 627.5 L623.5 627.5 L623.5 620.5 L625.5 620.5 L625.5 613.5 L627.5 613.5 L627.5 606.5 L629.5 606.5 L629.5 599.5 L631.5 599.5 L631.5 592.5 L632.5 592.5 L632.5 585.5 L634.5 585.5 L634.5 577.5 L636.5 577.5 L636.5 570.5 L638.5 570.5 L638.5 563.5 L640.5 563.5 L640.5 556.5 L641.5 556.5 L641.5 549.5 L643.5 549.5 L643.5 542.5 L645.5 542.5 L645.5 535.5 L647.5 535.5 L647.5 527.5 L649.5 527.5 L649.5 520.5 L650.5 520.5 L650.5 513.5 L652.5 513.5 L652.5 506.5 L654.5 506.5 L654.5 499.5 L656.5 499.5 L656.5 492.5 L658.5 492.5 L658.5 485.5 L659.5 485.5 L659.5 477.5 L661.5 477.5 L661.5 470.5 L663.5 470.5 L663.5 463.5 L665.5 463.5 L665.5 456.5 L667.5 456.5 L667.5 449.5 L668.5 449.5 L668.5 442.5 L670.5 442.5 L670.5 435.5 L672.5 435.5 L672.5 427.5 L674.5 427.5 L674.5 420.5 L676.5 420.5 L676.5 413.5 L677.5 413.5 L677.5 406.5 L679.5 406.5 L679.5 399.5 L681.5 399.5 L681.5 392.5 L683.5 392.5 L683.5 385.5 L685.5 385.5 L685.5 377.5 L686.5 377.5 L686.5 370.5 L688.5 370.5 L688.5 363.5 L690.5 363.5 L690.5 356.5 L692.5 356.5 L692.5 349.5 L694.5 349.5 L694.5 342.5 L695.5 342.5 L695.5 335.5 L697.5 335.5 L697.5 327.5 L699.5 327.5 L699.5 320.5 L701.5 320.5 L701.5 313.5 L703.5 313.5 L703.5 306.5 L704.5 306.5 L704.5 299.5 L706.5 299.5 L706.5 292.5 L708.5 292.5 L708.5 285.5 L710.5 285.5 L710.5 277.5 L712.5 277.5 L712.5 270.5 L713.5 270.5 L713.5 263.5 L715.5 263.5 L715.5 256.5 L717.5 256.5 L717.5 249.5 L719.5 249.5 L719.5 242.5 L721.5 242.5 L721.5 235.5 L722.5 235.5 L722.5 228.5 L724.5 228.5 L724.5 220.5 L726.5 220.5 L726.5 213.5 L728.5 213.5 L728.5 206.5 L730.5 206.5 L730.5 199.5 L731.5 199.5 L731.5 192.5 L733.5 192.5 L733.5 185.5 L735.5 185.5 L735.5 178.5 L737.5 178.5 L737.5 170.5 L739.5 170.5 L739.5 163.5 L740.5 163.5 L740.5 156.5 L742.5 156.5 L742.5 626.5 L744.5 626.5 L744.5 619.5 L746.5 619.5 L746.5 612.5 L748.5 612.5 L748.5 605.5 L749.5 605.5 L749.5 597.5 L751.5 597.5 L751.5 590.5 L753.5 590.5 L753.5 583.5 L755.5 583.5 L755.5 576.5 L757.5 576.5 L757.5 569.5 L758.5 569.5 L758.5 562.5 L760.5 562.5 L760.5 555.5 L762.5 555.5 L762.5 547.5 L764.5 547.5 L764.5 540.5 L766.5 540.5 L766.5 533.5 L767.5 533.5 L767.5 526.5 L769.5 526.5 L769.5 519.5 L771.5 519.5 L771.5 512.5 L773.5 512.5 L773.5 505.5 L775.5 505.5 L775.5 497.5 L776.5 497.5 L776.5 490.5 L778.5 490.5 L778.5 483.5 L780.5 483.5 L780.5 476.5 L782.5 476.5 L782.5 469.5 L784.5 469.5 L784.5 462.5 L785.5 462.5 L785.5 455.5 L787.5 455.5 L787.5 447.5 L789.5 447.5 L789.5 440.5 L791.5 440.5 L791.5 433.5 L793.5 433.5 L793.5 426.5 L794.5 426.5 L794.5 419.5 L796.5 419.5 L796.5 412.5 L798.5 412.5 L798.5 405.5 L800.5 405.5 L800.5 397.5 L802.5 397.5 L802.5 390.5 L803.5 390.5 L803.5 383.5 L805.5 383.5 L805.5 376.5 L807.5 376.5 L807.5 369.5 L809.5 369.5 L809.5 362.5 L811.5 362.5 L811.5 355.5 L812.5 355.5 L812.5 347.5 L814.5 347.5 L814.5 340.5 L816.5 340.5 L816.5 333.5 L818.5 333.5 L818.5 326.5 L820.5 326.5 L820.5 319.5 L821.5 319.5 L821.5 312.5 L823.5 312.5 L823.5 305.5 L825.5 305.5 L825.5 298.5 L827.5 298.5 L827.5 290.5 L829.5 290.5 L829.5 283.5 L830.5 283.5 L830.5 276.5 L832.5 276.5 L832.5 269.5 L834.5 269.5 L834.5 262.5 L836.5 262.5 L836.5 255.5 L838.5 255.5 L838.5 248.5 L839.5 248.5 L839.5 240.5 L841.5 240.5 L841.5 233.5 L843.5 233.5 L843.5 226.5 L845.5 226.5 L845.5 219.5 L847.5 219.5 L847.5 212.5 L848.5 212.5 L848.5 205.5 L850.5 205.5 L850.5 198.5 L852.5 198.5 L852.5 190.5 L854.5 190.5 L854.5 183.5 L856.5 183.5 L856.5 176.5 L857.5 176.5 L857.5 169.5 L859.5 169.5 L859.5 162.5 L861.5 162.5 L861.5 632.5 L863.5 632.5 L863.5 625.5 L865.5 625.5 L865.5 617.5 L866.5 617.5 L866.5 610.5 L868.5 610.5 L868.5 603.5 L870.5 603.5 L870.5 596.5 L872.5 596.5 L872.5 589.5 L874.5 589.5 L874.5 582.5 L875.5 582.5 L875.5 575.5 L877.5 575.5 L877.5 567.5 L879.5 567.5 L879.5 560.5 L881.5 560.5 L881.5 553.5 L883.5 553.5 L883.5 546.5 L884.5 546.5 L884.5 539.5 L886.5 539.5 L886.5 532.5 L888.5 532.5 L888.5 525.5 L890.5 525.5 L890.5 517.5 L892.5 517.5 L892.5 510.5 L893.5 510.5 L893.5 503.5 L895.5 503.5 L895.5 496.5 L897.5 496.5 L897.5 489.5 L899.5 489.5 L899.5 482.5 L901.5 482.5 L901.5 475.5 L902.5 475.5 L902.5 467.5 L904.5 467.5 L904.5 460.5 L906.5 460.5 L906.5 453.5 L908.5 453.5 L908.5 446.5 L910.5 446.5 L910.5 439.5 L911.5 439.5 L911.5 432.5 L913.5 432.5 L913.5 425.5 L915.5 425.5 L915.5 418.5 L917.5 418.5 L917.5 410.5 L919.5 410.5 L919.5 403.5 L920.5 403.5 L920.5 396.5 L922.5 396.5 L922.5 389.5 L924.5 389.5 L924.5 382.5 L926.5 382.5 L926.5 375.5 L928.5 375.5 L928.5 368.5 L929.5 368.5 L929.5 360.5 L931.5 360.5 L931.5 353.5 L933.5 353.5 L933.5 346.5 L935.5 346.5 L935.5 339.5 L937.5 339.5 L937.5 332.5 L938.5 332.5 L938.5 325.5 L940.5 325.5 L940.5 318.5 L942.5 318.5 L942.5 310.5 L944.5 310.5 L944.5 303.5 L946.5 303.5 L946.5 296.5 L947.5 296.5 L947.5 289.5 L949.5 289.5 L949.5 282.5 L951.5 282.5 L951.5 275.5 L953.5 275.5 L953.5 268.5 L955.5 268.5 L955.5 260.5 L956.5 260.5 L956.5 253.5 L958.5 253.5 L958.5 246.5 L960.5 246.5 L960.5 239.5 L962.5 239.5 L962.5 232.5 L964.5 232.5 L964.5 225.5 L965.5 225.5 L965.5 218.5 L967.5 218.5 L967.5 210.5 L969.5 210.5 L969.5 203.5 L971.5 203.5 L971.5 196.5 L973.5 196.5 L973.5 189.5 L974.5 189.5 L974.5 182.5 L1174.5 182.5" stroke="#ffff11"/>
</g>
<text x="76.5" y="705" font-size="10.67" fill="#b3b3b3" text-anchor="middle">4.15</text>
<text x="166.5" y="705" font-size="10.67" fill="#b3b3b3" text-anchor="middle">4.16</text>
<text x="256.5" y="705" font-size="10.67" fill="#b3b3b3" text-anchor="middle">4.17</text>
<text x="346.5" y="705" font-size="10.67" fill="#b3b3b3" text-anchor="middle">4.18</text>
<text x="436.5" y="705" font-size="10.67" fill="#b3b3b3" text-anchor="middle">4.19</text>
<text x="526.5" y="705" font-size="10.67" fill="#b3b3b3" text-anchor="middle">4.2</text>
<text x="616.5" y="705" font-size="10.67" fill="#b3b3b3" text-anchor="middle">4.21</text>
<text x="706.5" y="705" font-size="10.67" fill="#b3b3b3" text-anchor="middle">4.22</text>
<text x="796.5" y="705" font-size="10.67" fill="#b3b3b3" text-anchor="middle">4.23</text>
<text x="17" y="636" font-size="10.67" fill="#b3b3b3" text-anchor="end">0</text>
<text x="17" y="570" font-size="10.67" fill="#b3b3b3" text-anchor="end">50</text>
<text x="17" y="503" font-size="10.67" fill="#b3b3b3" text-anchor="end">100</text>
<text x="17" y="437" font-size="10.67" fill="#b3b3b3" text-anchor="end">150</text>
<text x="17" y="371" font-size="10.67" fill="#b3b3b3" text-anchor="end">200</text>
<text x="17" y="305" font-size="10.67" fill="#b3b3b3" text-anchor="end">250</text>
<text x="17" y="238" font-size="10.67" fill="#b3b3b3" text-anchor="end">300</text>
<text x="17" y="172" font-size="10.67" fill="#b3b3b3" text-anchor="end">350</text>
<text x="17" y="106" font-size="10.67" fill="#b3b3b3" text-anchor="end">400</text>
<text x="428.0" y="89.6" font-size="13.33" fill="#b3b3b3" text-anchor="middle">&lt;Theta_elec&gt;</text>
<text x="428.0" y="721.7" font-size="13.33" fill="#b3b3b3" text-anchor="middle">Time</text>
<rect x="710.5" y="106.5" width="116" height="18" fill="#000000" stroke="#d2d2d2" stroke-width="1"/>
<path d="M714 121.5 H724.5 V113.5 H734.5" stroke="#ffff11" stroke-width="1" fill="none"/>
<text x="757.5" y="119" font-size="10.67" fill="#e6e6e6">&lt;Theta_elec&gt;</text>
<defs><clipPath id="clip2top"><rect x="868" y="96" width="823" height="596"/></clipPath></defs>
<rect x="867" y="95" width="824" height="598" fill="#000000"/>
<path d="M925.5 96 V692 M1016.5 96 V692 M1106.5 96 V692 M1196.5 96 V692 M1287.5 96 V692 M1377.5 96 V692 M1467.5 96 V692 M1558.5 96 V692 M1648.5 96 V692" stroke="#afafaf" stroke-opacity="0.4" stroke-width="1" fill="none"/>
<path d="M868 632.5 H1690 M868 537.5 H1690 M868 441.5 H1690 M868 346.5 H1690 M868 250.5 H1690 M868 155.5 H1690" stroke="#afafaf" stroke-opacity="0.4" stroke-width="1" fill="none"/>
<path d="M925.5 692 V683 M925.5 96 V105 M1016.5 692 V683 M1016.5 96 V105 M1106.5 692 V683 M1106.5 96 V105 M1196.5 692 V683 M1196.5 96 V105 M1287.5 692 V683 M1287.5 96 V105 M1377.5 692 V683 M1377.5 96 V105 M1467.5 692 V683 M1467.5 96 V105 M1558.5 692 V683 M1558.5 96 V105 M1648.5 692 V683 M1648.5 96 V105 M868 632.5 H877 M1690 632.5 H1681 M868 537.5 H877 M1690 537.5 H1681 M868 441.5 H877 M1690 441.5 H1681 M868 346.5 H877 M1690 346.5 H1681 M868 250.5 H877 M1690 250.5 H1681 M868 155.5 H877 M1690 155.5 H1681" stroke="#b3b3b3" stroke-width="1" fill="none"/>
<rect x="867.5" y="95.5" width="823" height="597" fill="none" stroke="#b3b3b3" stroke-width="1"/>
<g clip-path="url(#clip2top)" fill="none" stroke-width="1">
<path d="M745.5 632.5 L768.5 632.5 L768.5 155.5 L830.5 155.5 L830.5 632.5 L889.5 632.5 L889.5 155.5 L949.5 155.5 L949.5 632.5 L1010.5 632.5 L1010.5 155.5 L1070.5 155.5 L1070.5 632.5 L1131.5 632.5 L1131.5 155.5 L1191.5 155.5 L1191.5 632.5 L1251.5 632.5 L1251.5 155.5 L1312.5 155.5 L1312.5 632.5 L1372.5 632.5 L1372.5 155.5 L1433.5 155.5 L1433.5 632.5 L1493.5 632.5 L1493.5 155.5 L1552.5 155.5 L1552.5 632.5 L1614.5 632.5 L1614.5 155.5 L1673.5 155.5 L1673.5 632.5 L1735.5 632.5 L1735.5 155.5 L1794.5 155.5 L1794.5 632.5 L2027.5 632.5" stroke="#ffff11"/>
</g>
<text x="925.5" y="705" font-size="10.67" fill="#b3b3b3" text-anchor="middle">4.15</text>
<text x="1016.5" y="705" font-size="10.67" fill="#b3b3b3" text-anchor="middle">4.16</text>
<text x="1106.5" y="705" font-size="10.67" fill="#b3b3b3" text-anchor="middle">4.17</text>
<text x="1196.5" y="705" font-size="10.67" fill="#b3b3b3" text-anchor="middle">4.18</text>
<text x="1287.5" y="705" font-size="10.67" fill="#b3b3b3" text-anchor="middle">4.19</text>
<text x="1377.5" y="705" font-size="10.67" fill="#b3b3b3" text-anchor="middle">4.2</text>
<text x="1467.5" y="705" font-size="10.67" fill="#b3b3b3" text-anchor="middle">4.21</text>
<text x="1558.5" y="705" font-size="10.67" fill="#b3b3b3" text-anchor="middle">4.22</text>
<text x="1648.5" y="705" font-size="10.67" fill="#b3b3b3" text-anchor="middle">4.23</text>
<text x="866" y="636" font-size="10.67" fill="#b3b3b3" text-anchor="end">0</text>
<text x="866" y="541" font-size="10.67" fill="#b3b3b3" text-anchor="end">0.2</text>
<text x="866" y="445" font-size="10.67" fill="#b3b3b3" text-anchor="end">0.4</text>
<text x="866" y="350" font-size="10.67" fill="#b3b3b3" text-anchor="end">0.6</text>
<text x="866" y="254" font-size="10.67" fill="#b3b3b3" text-anchor="end">0.8</text>
<text x="866" y="159" font-size="10.67" fill="#b3b3b3" text-anchor="end">1</text>
<text x="1279.0" y="89.6" font-size="13.33" fill="#b3b3b3" text-anchor="middle">&lt;Hall_2&gt;</text>
<text x="1279.0" y="721.7" font-size="13.33" fill="#b3b3b3" text-anchor="middle">Time</text>
<rect x="1585.5" y="106.5" width="94" height="18" fill="#000000" stroke="#d2d2d2" stroke-width="1"/>
<path d="M1589 121.5 H1599.5 V113.5 H1609.5" stroke="#ffff11" stroke-width="1" fill="none"/>
<text x="1632.5" y="119" font-size="10.67" fill="#e6e6e6">&lt;Hall_2&gt;</text>
<defs><clipPath id="clip3top"><rect x="1724" y="96" width="817" height="596"/></clipPath></defs>
<rect x="1723" y="95" width="818" height="598" fill="#000000"/>
<path d="M1781.5 96 V692 M1871.5 96 V692 M1961.5 96 V692 M2050.5 96 V692 M2140.5 96 V692 M2230.5 96 V692 M2320.5 96 V692 M2409.5 96 V692 M2499.5 96 V692" stroke="#afafaf" stroke-opacity="0.4" stroke-width="1" fill="none"/>
<path d="M1724 632.5 H2540 M1724 537.5 H2540 M1724 441.5 H2540 M1724 346.5 H2540 M1724 250.5 H2540 M1724 155.5 H2540" stroke="#afafaf" stroke-opacity="0.4" stroke-width="1" fill="none"/>
<path d="M1781.5 692 V683 M1781.5 96 V105 M1871.5 692 V683 M1871.5 96 V105 M1961.5 692 V683 M1961.5 96 V105 M2050.5 692 V683 M2050.5 96 V105 M2140.5 692 V683 M2140.5 96 V105 M2230.5 692 V683 M2230.5 96 V105 M2320.5 692 V683 M2320.5 96 V105 M2409.5 692 V683 M2409.5 96 V105 M2499.5 692 V683 M2499.5 96 V105 M1724 632.5 H1733 M2540 632.5 H2531 M1724 537.5 H1733 M2540 537.5 H2531 M1724 441.5 H1733 M2540 441.5 H2531 M1724 346.5 H1733 M2540 346.5 H2531 M1724 250.5 H1733 M2540 250.5 H2531 M1724 155.5 H1733 M2540 155.5 H2531" stroke="#b3b3b3" stroke-width="1" fill="none"/>
<rect x="1723.5" y="95.5" width="817" height="597" fill="none" stroke="#b3b3b3" stroke-width="1"/>
<g clip-path="url(#clip3top)" fill="none" stroke-width="1">
<path d="M1602.5 155.5 L1605.5 155.5 L1605.5 632.5 L1664.5 632.5 L1664.5 155.5 L1725.5 155.5 L1725.5 632.5 L1785.5 632.5 L1785.5 155.5 L1846.5 155.5 L1846.5 632.5 L1905.5 632.5 L1905.5 155.5 L1964.5 155.5 L1964.5 632.5 L2025.5 632.5 L2025.5 155.5 L2084.5 155.5 L2084.5 632.5 L2146.5 632.5 L2146.5 155.5 L2205.5 155.5 L2205.5 632.5 L2264.5 632.5 L2264.5 155.5 L2325.5 155.5 L2325.5 632.5 L2384.5 632.5 L2384.5 155.5 L2445.5 155.5 L2445.5 632.5 L2505.5 632.5 L2505.5 155.5 L2564.5 155.5 L2564.5 632.5 L2625.5 632.5 L2625.5 155.5 L2877.5 155.5" stroke="#ffff11"/>
<path d="M1602.5 632.5 L1625.5 632.5 L1625.5 155.5 L1686.5 155.5 L1686.5 632.5 L1745.5 632.5 L1745.5 155.5 L1804.5 155.5 L1804.5 632.5 L1865.5 632.5 L1865.5 155.5 L1925.5 155.5 L1925.5 632.5 L1986.5 632.5 L1986.5 155.5 L2045.5 155.5 L2045.5 632.5 L2104.5 632.5 L2104.5 155.5 L2165.5 155.5 L2165.5 632.5 L2224.5 632.5 L2224.5 155.5 L2286.5 155.5 L2286.5 632.5 L2345.5 632.5 L2345.5 155.5 L2404.5 155.5 L2404.5 632.5 L2465.5 632.5 L2465.5 155.5 L2524.5 155.5 L2524.5 632.5 L2585.5 632.5 L2585.5 155.5 L2645.5 155.5 L2645.5 632.5 L2877.5 632.5" stroke="#139fff"/>
<path d="M1602.5 155.5 L1645.5 155.5 L1645.5 632.5 L1706.5 632.5 L1706.5 155.5 L1765.5 155.5 L1765.5 632.5 L1824.5 632.5 L1824.5 155.5 L1885.5 155.5 L1885.5 632.5 L1944.5 632.5 L1944.5 155.5 L2006.5 155.5 L2006.5 632.5 L2065.5 632.5 L2065.5 155.5 L2126.5 155.5 L2126.5 632.5 L2185.5 632.5 L2185.5 155.5 L2244.5 155.5 L2244.5 632.5 L2305.5 632.5 L2305.5 155.5 L2365.5 155.5 L2365.5 632.5 L2426.5 632.5 L2426.5 155.5 L2485.5 155.5 L2485.5 632.5 L2544.5 632.5 L2544.5 155.5 L2605.5 155.5 L2605.5 632.5 L2664.5 632.5 L2664.5 155.5 L2877.5 155.5" stroke="#ff6929"/>
</g>
<text x="1781.5" y="705" font-size="10.67" fill="#b3b3b3" text-anchor="middle">4.15</text>
<text x="1871.5" y="705" font-size="10.67" fill="#b3b3b3" text-anchor="middle">4.16</text>
<text x="1961.5" y="705" font-size="10.67" fill="#b3b3b3" text-anchor="middle">4.17</text>
<text x="2050.5" y="705" font-size="10.67" fill="#b3b3b3" text-anchor="middle">4.18</text>
<text x="2140.5" y="705" font-size="10.67" fill="#b3b3b3" text-anchor="middle">4.19</text>
<text x="2230.5" y="705" font-size="10.67" fill="#b3b3b3" text-anchor="middle">4.2</text>
<text x="2320.5" y="705" font-size="10.67" fill="#b3b3b3" text-anchor="middle">4.21</text>
<text x="2409.5" y="705" font-size="10.67" fill="#b3b3b3" text-anchor="middle">4.22</text>
<text x="2499.5" y="705" font-size="10.67" fill="#b3b3b3" text-anchor="middle">4.23</text>
<text x="1722" y="636" font-size="10.67" fill="#b3b3b3" text-anchor="end">0</text>
<text x="1722" y="541" font-size="10.67" fill="#b3b3b3" text-anchor="end">0.2</text>
<text x="1722" y="445" font-size="10.67" fill="#b3b3b3" text-anchor="end">0.4</text>
<text x="1722" y="350" font-size="10.67" fill="#b3b3b3" text-anchor="end">0.6</text>
<text x="1722" y="254" font-size="10.67" fill="#b3b3b3" text-anchor="end">0.8</text>
<text x="1722" y="159" font-size="10.67" fill="#b3b3b3" text-anchor="end">1</text>
<text x="2132.0" y="89.6" font-size="13.33" fill="#b3b3b3" text-anchor="middle">&lt;Hall&gt;</text>
<text x="2132.0" y="721.7" font-size="13.33" fill="#b3b3b3" text-anchor="middle">Time</text>
<rect x="2387.5" y="99.5" width="90" height="47" fill="#000000" stroke="#d2d2d2" stroke-width="1"/>
<path d="M2391 113.5 H2401.5 V105.5 H2411.5" stroke="#ffff11" stroke-width="1" fill="none"/>
<text x="2434.5" y="112.0" font-size="10.67" fill="#e6e6e6">&lt;Hall&gt;:1</text>
<path d="M2391 127.8 H2401.5 V119.8 H2411.5" stroke="#139fff" stroke-width="1" fill="none"/>
<text x="2434.5" y="126.3" font-size="10.67" fill="#e6e6e6">&lt;Hall&gt;:2</text>
<path d="M2391 142.1 H2401.5 V134.1 H2411.5" stroke="#ff6929" stroke-width="1" fill="none"/>
<text x="2434.5" y="140.6" font-size="10.67" fill="#e6e6e6">&lt;Hall&gt;:3</text>
<defs><clipPath id="clip1bot"><rect x="19" y="751" width="819" height="593"/></clipPath></defs>
<rect x="18" y="750" width="820" height="595" fill="#000000"/>
<path d="M76.5 751 V1344 M166.5 751 V1344 M256.5 751 V1344 M346.5 751 V1344 M436.5 751 V1344 M526.5 751 V1344 M616.5 751 V1344 M706.5 751 V1344 M796.5 751 V1344" stroke="#afafaf" stroke-opacity="0.4" stroke-width="1" fill="none"/>
<path d="M19 1285.5 H837 M19 1190.5 H837 M19 1095.5 H837 M19 999.5 H837 M19 904.5 H837 M19 809.5 H837" stroke="#afafaf" stroke-opacity="0.4" stroke-width="1" fill="none"/>
<path d="M76.5 1344 V1335 M76.5 751 V760 M166.5 1344 V1335 M166.5 751 V760 M256.5 1344 V1335 M256.5 751 V760 M346.5 1344 V1335 M346.5 751 V760 M436.5 1344 V1335 M436.5 751 V760 M526.5 1344 V1335 M526.5 751 V760 M616.5 1344 V1335 M616.5 751 V760 M706.5 1344 V1335 M706.5 751 V760 M796.5 1344 V1335 M796.5 751 V760 M19 1285.5 H28 M837 1285.5 H828 M19 1190.5 H28 M837 1190.5 H828 M19 1095.5 H28 M837 1095.5 H828 M19 999.5 H28 M837 999.5 H828 M19 904.5 H28 M837 904.5 H828 M19 809.5 H28 M837 809.5 H828" stroke="#b3b3b3" stroke-width="1" fill="none"/>
<rect x="18.5" y="750.5" width="819" height="594" fill="none" stroke="#b3b3b3" stroke-width="1"/>
<g clip-path="url(#clip1bot)" fill="none" stroke-width="1">
<path d="M-103.5 809.5 L-60.5 809.5 L-60.5 1285.5 L1.5 1285.5 L1.5 809.5 L60.5 809.5 L60.5 1285.5 L119.5 1285.5 L119.5 809.5 L181.5 809.5 L181.5 1285.5 L240.5 1285.5 L240.5 809.5 L301.5 809.5 L301.5 1285.5 L361.5 1285.5 L361.5 809.5 L422.5 809.5 L422.5 1285.5 L481.5 1285.5 L481.5 809.5 L541.5 809.5 L541.5 1285.5 L602.5 1285.5 L602.5 809.5 L661.5 809.5 L661.5 1285.5 L722.5 1285.5 L722.5 809.5 L782.5 809.5 L782.5 1285.5 L841.5 1285.5 L841.5 809.5 L902.5 809.5 L902.5 1285.5 L962.5 1285.5 L962.5 809.5 L1174.5 809.5" stroke="#ffff11"/>
</g>
<text x="76.5" y="1357" font-size="10.67" fill="#b3b3b3" text-anchor="middle">4.15</text>
<text x="166.5" y="1357" font-size="10.67" fill="#b3b3b3" text-anchor="middle">4.16</text>
<text x="256.5" y="1357" font-size="10.67" fill="#b3b3b3" text-anchor="middle">4.17</text>
<text x="346.5" y="1357" font-size="10.67" fill="#b3b3b3" text-anchor="middle">4.18</text>
<text x="436.5" y="1357" font-size="10.67" fill="#b3b3b3" text-anchor="middle">4.19</text>
<text x="526.5" y="1357" font-size="10.67" fill="#b3b3b3" text-anchor="middle">4.2</text>
<text x="616.5" y="1357" font-size="10.67" fill="#b3b3b3" text-anchor="middle">4.21</text>
<text x="706.5" y="1357" font-size="10.67" fill="#b3b3b3" text-anchor="middle">4.22</text>
<text x="796.5" y="1357" font-size="10.67" fill="#b3b3b3" text-anchor="middle">4.23</text>
<text x="17" y="1289" font-size="10.67" fill="#b3b3b3" text-anchor="end">0</text>
<text x="17" y="1194" font-size="10.67" fill="#b3b3b3" text-anchor="end">0.2</text>
<text x="17" y="1099" font-size="10.67" fill="#b3b3b3" text-anchor="end">0.4</text>
<text x="17" y="1003" font-size="10.67" fill="#b3b3b3" text-anchor="end">0.6</text>
<text x="17" y="908" font-size="10.67" fill="#b3b3b3" text-anchor="end">0.8</text>
<text x="17" y="813" font-size="10.67" fill="#b3b3b3" text-anchor="end">1</text>
<text x="428.0" y="743.8" font-size="13.33" fill="#b3b3b3" text-anchor="middle">&lt;Hall_1&gt;</text>
<text x="428.0" y="1374.8" font-size="13.33" fill="#b3b3b3" text-anchor="middle">Time</text>
<rect x="733.5" y="761.5" width="93" height="17" fill="#000000" stroke="#d2d2d2" stroke-width="1"/>
<path d="M737 776.5 H747.5 V768.5 H757.5" stroke="#ffff11" stroke-width="1" fill="none"/>
<text x="780.5" y="774" font-size="10.67" fill="#e6e6e6">&lt;Hall_1&gt;</text>
<defs><clipPath id="clip2bot"><rect x="868" y="751" width="823" height="593"/></clipPath></defs>
<rect x="867" y="750" width="824" height="595" fill="#000000"/>
<path d="M925.5 751 V1344 M1016.5 751 V1344 M1106.5 751 V1344 M1196.5 751 V1344 M1287.5 751 V1344 M1377.5 751 V1344 M1467.5 751 V1344 M1558.5 751 V1344 M1648.5 751 V1344" stroke="#afafaf" stroke-opacity="0.4" stroke-width="1" fill="none"/>
<path d="M868 1285.5 H1690 M868 1190.5 H1690 M868 1095.5 H1690 M868 999.5 H1690 M868 904.5 H1690 M868 809.5 H1690" stroke="#afafaf" stroke-opacity="0.4" stroke-width="1" fill="none"/>
<path d="M925.5 1344 V1335 M925.5 751 V760 M1016.5 1344 V1335 M1016.5 751 V760 M1106.5 1344 V1335 M1106.5 751 V760 M1196.5 1344 V1335 M1196.5 751 V760 M1287.5 1344 V1335 M1287.5 751 V760 M1377.5 1344 V1335 M1377.5 751 V760 M1467.5 1344 V1335 M1467.5 751 V760 M1558.5 1344 V1335 M1558.5 751 V760 M1648.5 1344 V1335 M1648.5 751 V760 M868 1285.5 H877 M1690 1285.5 H1681 M868 1190.5 H877 M1690 1190.5 H1681 M868 1095.5 H877 M1690 1095.5 H1681 M868 999.5 H877 M1690 999.5 H1681 M868 904.5 H877 M1690 904.5 H1681 M868 809.5 H877 M1690 809.5 H1681" stroke="#b3b3b3" stroke-width="1" fill="none"/>
<rect x="867.5" y="750.5" width="823" height="594" fill="none" stroke="#b3b3b3" stroke-width="1"/>
<g clip-path="url(#clip2bot)" fill="none" stroke-width="1">
<path d="M745.5 809.5 L748.5 809.5 L748.5 1285.5 L808.5 1285.5 L808.5 809.5 L870.5 809.5 L870.5 1285.5 L929.5 1285.5 L929.5 809.5 L991.5 809.5 L991.5 1285.5 L1050.5 1285.5 L1050.5 809.5 L1110.5 809.5 L1110.5 1285.5 L1171.5 1285.5 L1171.5 809.5 L1231.5 809.5 L1231.5 1285.5 L1292.5 1285.5 L1292.5 809.5 L1352.5 809.5 L1352.5 1285.5 L1411.5 1285.5 L1411.5 809.5 L1473.5 809.5 L1473.5 1285.5 L1532.5 1285.5 L1532.5 809.5 L1594.5 809.5 L1594.5 1285.5 L1654.5 1285.5 L1654.5 809.5 L1713.5 809.5 L1713.5 1285.5 L1775.5 1285.5 L1775.5 809.5 L2027.5 809.5" stroke="#ffff11"/>
</g>
<text x="925.5" y="1357" font-size="10.67" fill="#b3b3b3" text-anchor="middle">4.15</text>
<text x="1016.5" y="1357" font-size="10.67" fill="#b3b3b3" text-anchor="middle">4.16</text>
<text x="1106.5" y="1357" font-size="10.67" fill="#b3b3b3" text-anchor="middle">4.17</text>
<text x="1196.5" y="1357" font-size="10.67" fill="#b3b3b3" text-anchor="middle">4.18</text>
<text x="1287.5" y="1357" font-size="10.67" fill="#b3b3b3" text-anchor="middle">4.19</text>
<text x="1377.5" y="1357" font-size="10.67" fill="#b3b3b3" text-anchor="middle">4.2</text>
<text x="1467.5" y="1357" font-size="10.67" fill="#b3b3b3" text-anchor="middle">4.21</text>
<text x="1558.5" y="1357" font-size="10.67" fill="#b3b3b3" text-anchor="middle">4.22</text>
<text x="1648.5" y="1357" font-size="10.67" fill="#b3b3b3" text-anchor="middle">4.23</text>
<text x="866" y="1289" font-size="10.67" fill="#b3b3b3" text-anchor="end">0</text>
<text x="866" y="1194" font-size="10.67" fill="#b3b3b3" text-anchor="end">0.2</text>
<text x="866" y="1099" font-size="10.67" fill="#b3b3b3" text-anchor="end">0.4</text>
<text x="866" y="1003" font-size="10.67" fill="#b3b3b3" text-anchor="end">0.6</text>
<text x="866" y="908" font-size="10.67" fill="#b3b3b3" text-anchor="end">0.8</text>
<text x="866" y="813" font-size="10.67" fill="#b3b3b3" text-anchor="end">1</text>
<text x="1279.0" y="743.8" font-size="13.33" fill="#b3b3b3" text-anchor="middle">&lt;Hall_3&gt;</text>
<text x="1279.0" y="1374.8" font-size="13.33" fill="#b3b3b3" text-anchor="middle">Time</text>
<rect x="1585.5" y="761.5" width="94" height="17" fill="#000000" stroke="#d2d2d2" stroke-width="1"/>
<path d="M1589 776.5 H1599.5 V768.5 H1609.5" stroke="#ffff11" stroke-width="1" fill="none"/>
<text x="1632.5" y="774" font-size="10.67" fill="#e6e6e6">&lt;Hall_3&gt;</text>
<defs><clipPath id="clip3bot"><rect x="1724" y="751" width="817" height="593"/></clipPath></defs>
<rect x="1723" y="750" width="818" height="595" fill="#000000"/>
<path d="M1781.5 751 V1344 M1871.5 751 V1344 M1961.5 751 V1344 M2050.5 751 V1344 M2140.5 751 V1344 M2230.5 751 V1344 M2320.5 751 V1344 M2409.5 751 V1344 M2499.5 751 V1344" stroke="#afafaf" stroke-opacity="0.4" stroke-width="1" fill="none"/>
<path d="M1724 1285.5 H2540 M1724 1166.5 H2540 M1724 1047.5 H2540 M1724 928.5 H2540 M1724 809.5 H2540" stroke="#afafaf" stroke-opacity="0.4" stroke-width="1" fill="none"/>
<path d="M1781.5 1344 V1335 M1781.5 751 V760 M1871.5 1344 V1335 M1871.5 751 V760 M1961.5 1344 V1335 M1961.5 751 V760 M2050.5 1344 V1335 M2050.5 751 V760 M2140.5 1344 V1335 M2140.5 751 V760 M2230.5 1344 V1335 M2230.5 751 V760 M2320.5 1344 V1335 M2320.5 751 V760 M2409.5 1344 V1335 M2409.5 751 V760 M2499.5 1344 V1335 M2499.5 751 V760 M1724 1285.5 H1733 M2540 1285.5 H2531 M1724 1166.5 H1733 M2540 1166.5 H2531 M1724 1047.5 H1733 M2540 1047.5 H2531 M1724 928.5 H1733 M2540 928.5 H2531 M1724 809.5 H1733 M2540 809.5 H2531" stroke="#b3b3b3" stroke-width="1" fill="none"/>
<rect x="1723.5" y="750.5" width="817" height="594" fill="none" stroke="#b3b3b3" stroke-width="1"/>
<g clip-path="url(#clip3bot)" fill="none" stroke-width="1">
<path d="M1602.5 809.5 L1605.5 809.5 L1605.5 1047.5 L1625.5 1047.5 L1625.5 1285.5 L1664.5 1285.5 L1664.5 1047.5 L1686.5 1047.5 L1686.5 809.5 L1725.5 809.5 L1725.5 1047.5 L1745.5 1047.5 L1745.5 1285.5 L1785.5 1285.5 L1785.5 1047.5 L1804.5 1047.5 L1804.5 809.5 L1846.5 809.5 L1846.5 1047.5 L1865.5 1047.5 L1865.5 1285.5 L1905.5 1285.5 L1905.5 1047.5 L1925.5 1047.5 L1925.5 809.5 L1964.5 809.5 L1964.5 1047.5 L1986.5 1047.5 L1986.5 1285.5 L2025.5 1285.5 L2025.5 1047.5 L2045.5 1047.5 L2045.5 809.5 L2084.5 809.5 L2084.5 1047.5 L2104.5 1047.5 L2104.5 1285.5 L2146.5 1285.5 L2146.5 1047.5 L2165.5 1047.5 L2165.5 809.5 L2205.5 809.5 L2205.5 1047.5 L2224.5 1047.5 L2224.5 1285.5 L2264.5 1285.5 L2264.5 1047.5 L2286.5 1047.5 L2286.5 809.5 L2325.5 809.5 L2325.5 1047.5 L2345.5 1047.5 L2345.5 1285.5 L2384.5 1285.5 L2384.5 1047.5 L2404.5 1047.5 L2404.5 809.5 L2445.5 809.5 L2445.5 1047.5 L2465.5 1047.5 L2465.5 1285.5 L2505.5 1285.5 L2505.5 1047.5 L2524.5 1047.5 L2524.5 809.5 L2564.5 809.5 L2564.5 1047.5 L2585.5 1047.5 L2585.5 1285.5 L2625.5 1285.5 L2625.5 1047.5 L2645.5 1047.5 L2645.5 809.5 L2877.5 809.5" stroke="#ffff11"/>
<path d="M1602.5 1285.5 L1625.5 1285.5 L1625.5 1047.5 L1645.5 1047.5 L1645.5 809.5 L1686.5 809.5 L1686.5 1047.5 L1706.5 1047.5 L1706.5 1285.5 L1745.5 1285.5 L1745.5 1047.5 L1765.5 1047.5 L1765.5 809.5 L1804.5 809.5 L1804.5 1047.5 L1824.5 1047.5 L1824.5 1285.5 L1865.5 1285.5 L1865.5 1047.5 L1885.5 1047.5 L1885.5 809.5 L1925.5 809.5 L1925.5 1047.5 L1944.5 1047.5 L1944.5 1285.5 L1986.5 1285.5 L1986.5 1047.5 L2006.5 1047.5 L2006.5 809.5 L2045.5 809.5 L2045.5 1047.5 L2065.5 1047.5 L2065.5 1285.5 L2104.5 1285.5 L2104.5 1047.5 L2126.5 1047.5 L2126.5 809.5 L2165.5 809.5 L2165.5 1047.5 L2185.5 1047.5 L2185.5 1285.5 L2224.5 1285.5 L2224.5 1047.5 L2244.5 1047.5 L2244.5 809.5 L2286.5 809.5 L2286.5 1047.5 L2305.5 1047.5 L2305.5 1285.5 L2345.5 1285.5 L2345.5 1047.5 L2365.5 1047.5 L2365.5 809.5 L2404.5 809.5 L2404.5 1047.5 L2426.5 1047.5 L2426.5 1285.5 L2465.5 1285.5 L2465.5 1047.5 L2485.5 1047.5 L2485.5 809.5 L2524.5 809.5 L2524.5 1047.5 L2544.5 1047.5 L2544.5 1285.5 L2585.5 1285.5 L2585.5 1047.5 L2605.5 1047.5 L2605.5 809.5 L2645.5 809.5 L2645.5 1047.5 L2664.5 1047.5 L2664.5 1285.5 L2877.5 1285.5" stroke="#139fff"/>
<path d="M1602.5 1047.5 L1605.5 1047.5 L1605.5 809.5 L1645.5 809.5 L1645.5 1047.5 L1664.5 1047.5 L1664.5 1285.5 L1706.5 1285.5 L1706.5 1047.5 L1725.5 1047.5 L1725.5 809.5 L1765.5 809.5 L1765.5 1047.5 L1785.5 1047.5 L1785.5 1285.5 L1824.5 1285.5 L1824.5 1047.5 L1846.5 1047.5 L1846.5 809.5 L1885.5 809.5 L1885.5 1047.5 L1905.5 1047.5 L1905.5 1285.5 L1944.5 1285.5 L1944.5 1047.5 L1964.5 1047.5 L1964.5 809.5 L2006.5 809.5 L2006.5 1047.5 L2025.5 1047.5 L2025.5 1285.5 L2065.5 1285.5 L2065.5 1047.5 L2084.5 1047.5 L2084.5 809.5 L2126.5 809.5 L2126.5 1047.5 L2146.5 1047.5 L2146.5 1285.5 L2185.5 1285.5 L2185.5 1047.5 L2205.5 1047.5 L2205.5 809.5 L2244.5 809.5 L2244.5 1047.5 L2264.5 1047.5 L2264.5 1285.5 L2305.5 1285.5 L2305.5 1047.5 L2325.5 1047.5 L2325.5 809.5 L2365.5 809.5 L2365.5 1047.5 L2384.5 1047.5 L2384.5 1285.5 L2426.5 1285.5 L2426.5 1047.5 L2445.5 1047.5 L2445.5 809.5 L2485.5 809.5 L2485.5 1047.5 L2505.5 1047.5 L2505.5 1285.5 L2544.5 1285.5 L2544.5 1047.5 L2564.5 1047.5 L2564.5 809.5 L2605.5 809.5 L2605.5 1047.5 L2625.5 1047.5 L2625.5 1285.5 L2664.5 1285.5 L2664.5 1047.5 L2877.5 1047.5" stroke="#ff6929"/>
</g>
<text x="1781.5" y="1357" font-size="10.67" fill="#b3b3b3" text-anchor="middle">4.15</text>
<text x="1871.5" y="1357" font-size="10.67" fill="#b3b3b3" text-anchor="middle">4.16</text>
<text x="1961.5" y="1357" font-size="10.67" fill="#b3b3b3" text-anchor="middle">4.17</text>
<text x="2050.5" y="1357" font-size="10.67" fill="#b3b3b3" text-anchor="middle">4.18</text>
<text x="2140.5" y="1357" font-size="10.67" fill="#b3b3b3" text-anchor="middle">4.19</text>
<text x="2230.5" y="1357" font-size="10.67" fill="#b3b3b3" text-anchor="middle">4.2</text>
<text x="2320.5" y="1357" font-size="10.67" fill="#b3b3b3" text-anchor="middle">4.21</text>
<text x="2409.5" y="1357" font-size="10.67" fill="#b3b3b3" text-anchor="middle">4.22</text>
<text x="2499.5" y="1357" font-size="10.67" fill="#b3b3b3" text-anchor="middle">4.23</text>
<text x="1722" y="1289" font-size="10.67" fill="#b3b3b3" text-anchor="end">-1</text>
<text x="1722" y="1170" font-size="10.67" fill="#b3b3b3" text-anchor="end">-0.5</text>
<text x="1722" y="1051" font-size="10.67" fill="#b3b3b3" text-anchor="end">0</text>
<text x="1722" y="932" font-size="10.67" fill="#b3b3b3" text-anchor="end">0.5</text>
<text x="1722" y="813" font-size="10.67" fill="#b3b3b3" text-anchor="end">1</text>
<text x="2132.0" y="743.8" font-size="13.33" fill="#b3b3b3" text-anchor="middle">&lt;Motor_phase_abc&gt;</text>
<text x="2132.0" y="1374.8" font-size="13.33" fill="#b3b3b3" text-anchor="middle">Time</text>
<rect x="2372.5" y="761.5" width="157" height="46" fill="#000000" stroke="#d2d2d2" stroke-width="1"/>
<path d="M2376 775.5 H2386.5 V767.5 H2396.5" stroke="#ffff11" stroke-width="1" fill="none"/>
<text x="2419.5" y="774.0" font-size="10.67" fill="#e6e6e6">&lt;Motor_phase_abc&gt;:1</text>
<path d="M2376 789.8 H2386.5 V781.8 H2396.5" stroke="#139fff" stroke-width="1" fill="none"/>
<text x="2419.5" y="788.3" font-size="10.67" fill="#e6e6e6">&lt;Motor_phase_abc&gt;:2</text>
<path d="M2376 804.1 H2386.5 V796.1 H2396.5" stroke="#ff6929" stroke-width="1" fill="none"/>
<text x="2419.5" y="802.6" font-size="10.67" fill="#e6e6e6">&lt;Motor_phase_abc&gt;:3</text>
</svg></body></html>
